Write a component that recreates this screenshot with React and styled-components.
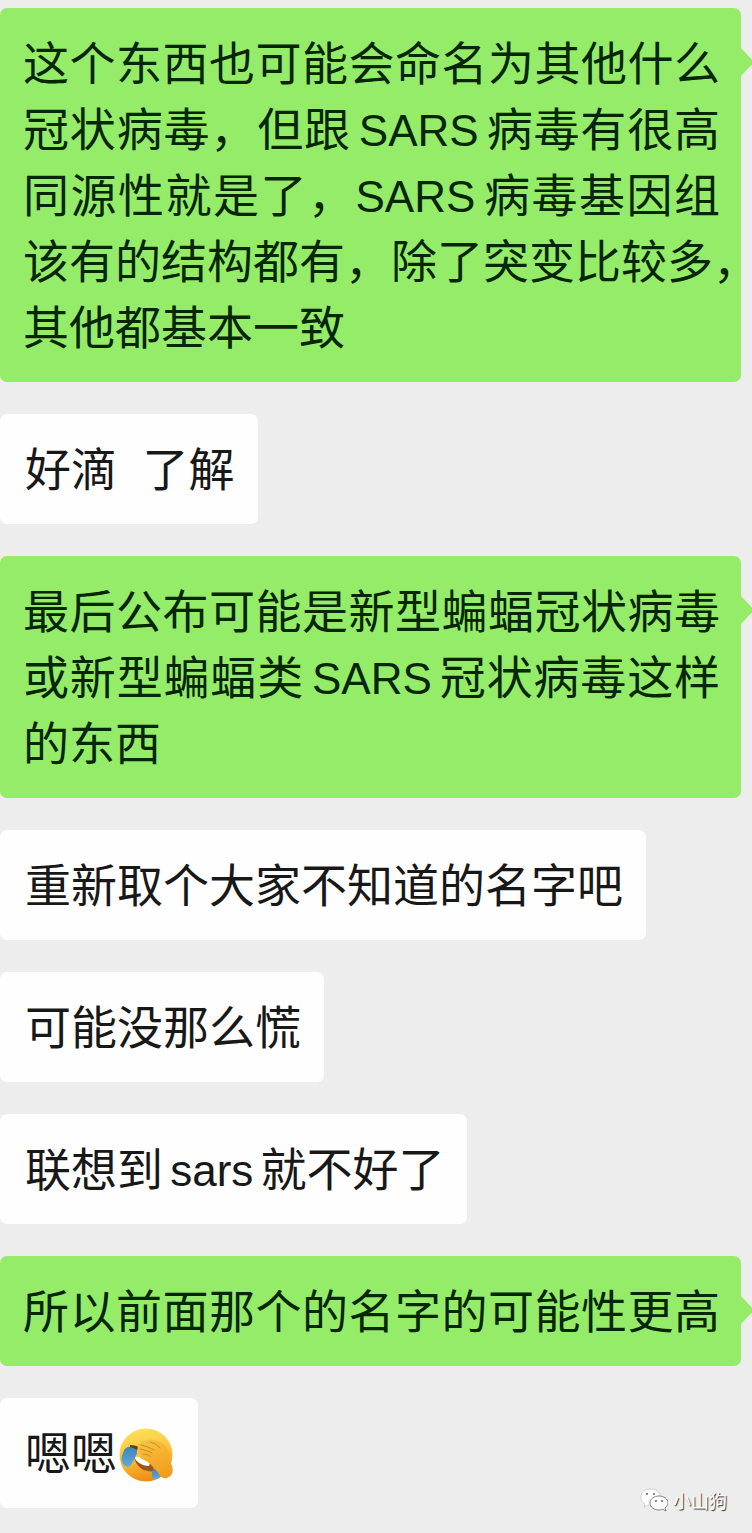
import React from "react";
import styled, { createGlobalStyle, css } from "styled-components";

const GlobalStyle = createGlobalStyle`
  * { box-sizing: border-box; }
  body {
    margin: 0;
    background: #ededed;
    font-family: "Noto Sans CJK SC", sans-serif;
  }
`;

const Page = styled.main`
  position: relative;
  overflow: hidden;
  padding: 8px 0 25px;
  background: #ededed;
`;

const Thread = styled.div`
  display: flex;
  flex-direction: column;
  align-items: flex-start;
  gap: 32px;
`;

const sent = css`
  align-self: stretch;
  margin-right: 11px;
  padding: 19px 21px 25px 23px;
  background: #95ec69;
  color: #062606;

  &::after {
    content: "";
    position: absolute;
    top: 40px;
    left: 100%;
    border: 14px solid transparent;
    border-left: 13px solid #95ec69;
    border-right: 0;
  }
`;

const received = css`
  padding: 19px 23px 25px 25px;
  background: #fefefe;
  color: #181818;
`;

const Bubble = styled.div`
  position: relative;
  border-radius: 7px;
  font-size: 46px;
  line-height: 66px;
  ${(p) => (p.$sent ? sent : received)}
`;

const Line = styled.span`
  display: block;
  height: 66px;
  white-space: nowrap;
  text-align-last: ${(p) => (p.$full ? "justify" : "left")};
`;

const Word = styled.span`
  font-family: "Liberation Sans", sans-serif;
  font-size: 44px;
`;

const ThinSpace = styled.span`
  font-size: 32px;
`;

const HalfWidth = styled.span`
  font-feature-settings: "halt";
`;

const Pause = styled.span`
  font-family: "Liberation Sans", sans-serif;
  white-space: pre;
`;

const Emoji = styled.svg`
  width: 54px;
  height: 54px;
  margin: 0 2px;
  vertical-align: -12px;
`;

const Watermark = styled.div`
  position: absolute;
  right: 25px;
  bottom: 20px;
  display: flex;
  align-items: center;
  gap: 5px;
  color: #fff;
  font-size: 18px;
  line-height: 26px;
  text-shadow: 1px 1px 1px #333;
`;

const Logo = styled.svg`
  width: 28px;
  height: 24px;
`;

function Latin({ children, afterComma }) {
  return (
    <>
      {!afterComma && <ThinSpace> </ThinSpace>}
      <Word>{children}</Word>
      <ThinSpace> </ThinSpace>
    </>
  );
}

function Facepalm() {
  return (
    <Emoji viewBox="0 0 54 54" role="img" aria-label="笑着捂脸">
      <defs>
        <linearGradient id="skin" x1="0.4" y1="0" x2="0.6" y2="1">
          <stop offset="0" stopColor="#fbe05a" />
          <stop offset="0.5" stopColor="#fbc136" />
          <stop offset="1" stopColor="#ea8a14" />
        </linearGradient>
        <linearGradient id="hand" x1="0.3" y1="0" x2="0.6" y2="1">
          <stop offset="0" stopColor="#f5c344" />
          <stop offset="0.5" stopColor="#f6ae2c" />
          <stop offset="1" stopColor="#f39c1e" />
        </linearGradient>
        <linearGradient id="tear" x1="0" y1="0" x2="0" y2="1">
          <stop offset="0" stopColor="#3f83b8" />
          <stop offset="1" stopColor="#62abdc" />
        </linearGradient>
      </defs>
      <circle cx="27" cy="27" r="26.5" fill="url(#skin)" />
      <path d="M15 29c6 1 12 4 19 8l1 6c-9 2-18-4-20-14Z" fill="#9a5518" />
      <path d="M15 29c5-1 12 2 16 6l-1 3c-6 0-12-3-15-9Z" fill="#fff" />
      <path d="M9 19c3-1 7 0 9 3 1 5-4 10-6 15-2 3-6 2-8-1-2-4-2-7 0-11 1-3 2-5 5-6Z" fill="url(#tear)" />
      <path d="M11 17q5 0 9 2l-2 3q-3-2-7-3Z" fill="#644016" />
      <path d="M34 41c3 0 7 2 8 6-1 4-5 5-8 3-2-3-1-6 0-9Z" fill="url(#tear)" />
      <path
        d="M19 19c-1-2 0-4 3-3-1-3 1-4 4-3 2-2 5-2 8-1 8 1 14 5 16 12 2 6 1 10 3 14 2 6 0 10-5 12-4 1-7-1-8-4-2-3-4-5-7-8-2-3-6-5-10-7-2-1-2-3 0-4-3-1-4-3-3-5-1 0-2-2-1-3Z"
        fill="url(#hand)"
      />
      <path
        d="M22 17c5 1 9 3 13 5M21 21c4 1 9 2 12 4M24 26c3 0 6 1 8 3M31 14c4 1 8 3 10 6"
        fill="none"
        stroke="#d08a20"
        strokeWidth="1"
        strokeLinecap="round"
      />
    </Emoji>
  );
}

function ChatLogo() {
  return (
    <Logo viewBox="0 0 28 24" aria-hidden="true">
      <path d="M10 1C5 1 1 4 1 9c0 3 1 5 4 7L4 19l4-2c5 1 12-2 12-8 0-5-4-8-10-8Z" fill="#fff" stroke="#bbb" strokeWidth="0.6" />
      <path d="M19 8c-5 0-9 3-9 7s4 7 9 7c1 0 2 0 3-1l4 2-1-3c1-1 3-3 3-5 0-4-4-7-9-7Z" fill="#fff" stroke="#666" strokeWidth="0.8" />
      <g fill="#666">
        <circle cx="7" cy="6" r="1" />
        <circle cx="14" cy="6" r="1" />
        <circle cx="16" cy="13" r="1" />
        <circle cx="22" cy="13" r="1" />
      </g>
    </Logo>
  );
}

export default function App() {
  return (
    <Page>
      <GlobalStyle />
      <Thread>
        <Bubble $sent>
          <Line $full>这个东西也可能会命名为其他什么</Line>
          <Line $full>冠状病毒，但跟<Latin>SARS</Latin>病毒有很高</Line>
          <Line $full>同源性就是了，<Latin afterComma>SARS</Latin>病毒基因组</Line>
          <Line>该有的结构都有，除了突变比较多<HalfWidth>，</HalfWidth></Line>
          <Line>其他都基本一致</Line>
        </Bubble>
        <Bubble>
          <Line>好滴<Pause>{"  "}</Pause>了解</Line>
        </Bubble>
        <Bubble $sent>
          <Line $full>最后公布可能是新型蝙蝠冠状病毒</Line>
          <Line $full>或新型蝙蝠类<Latin>SARS</Latin>冠状病毒这样</Line>
          <Line>的东西</Line>
        </Bubble>
        <Bubble>
          <Line>重新取个大家不知道的名字吧</Line>
        </Bubble>
        <Bubble>
          <Line>可能没那么慌</Line>
        </Bubble>
        <Bubble>
          <Line>联想到<Latin>sars</Latin>就不好了</Line>
        </Bubble>
        <Bubble $sent>
          <Line $full>所以前面那个的名字的可能性更高</Line>
        </Bubble>
        <Bubble>
          <Line>嗯嗯<Facepalm /></Line>
        </Bubble>
      </Thread>
      <Watermark>
        <ChatLogo />
        <span>小山狗</span>
      </Watermark>
    </Page>
  );
}
